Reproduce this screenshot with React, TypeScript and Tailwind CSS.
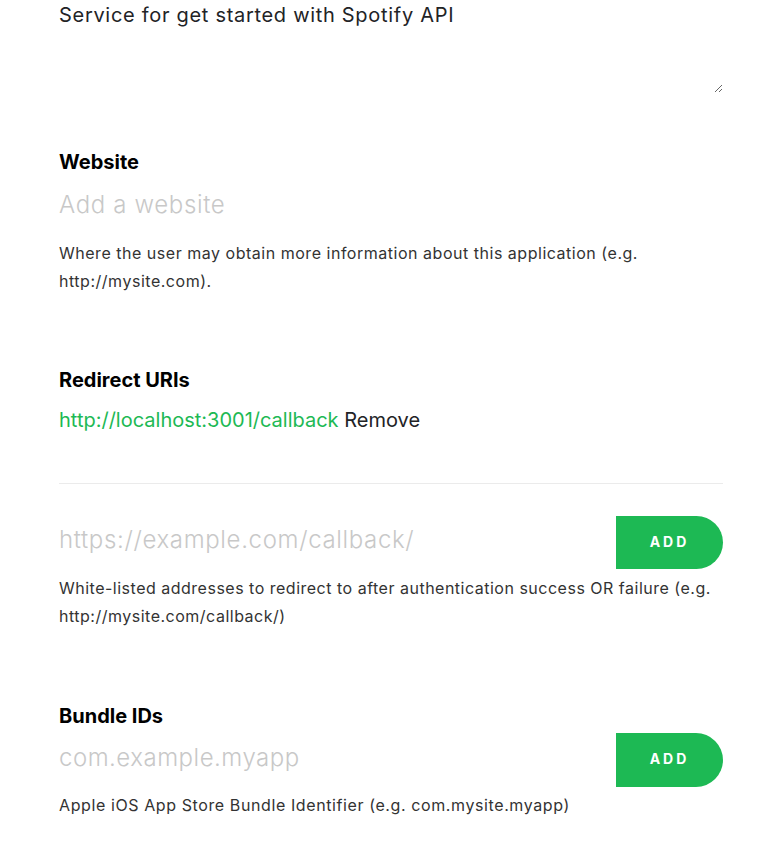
export default function App() {
  return (
    <div
      className="min-h-screen bg-white pl-[59px] pr-[35px] text-[#222326]"
      style={{ fontFamily: "Inter, 'Open Sans', sans-serif" }}
    >
      <textarea
        className="block w-full h-[93px] resize-y text-[20px] leading-[30px] tracking-[0.7px] text-[#222326] outline-none border-0 p-0"
        defaultValue="Service for get started with Spotify API"
      />

      {/* Website */}
      <section className="mt-[55px]">
        <h3 className="text-[20px] leading-[28px] font-bold text-black">Website</h3>
        <input
          className="mt-2 block w-full h-10 text-[24px] font-light tracking-[0.65px] text-[#222326] placeholder:text-[#c8c8c8] outline-none"
          placeholder="Add a website"
        />
        <p className="mt-[15px] text-[16px] leading-[28px] tracking-[0.52px] text-[#333]">
          Where the user may obtain more information about this application (e.g.
          <br />
          http://mysite.com).
        </p>
      </section>

      {/* Redirect URIs */}
      <section className="mt-[71px]">
        <h3 className="text-[20px] leading-[28px] font-bold text-black">Redirect URIs</h3>
        <div className="mt-3 text-[20px] leading-[28px]">
          <span className="text-[#1db954]">http://localhost:3001/callback</span>{" "}
          <span className="text-[#222326]">Remove</span>
        </div>
        <div className="mt-[49px] h-px bg-[#ebebeb]" />
        <div className="mt-8 flex items-center">
          <input
            className="flex-1 h-10 mb-[6px] text-[24px] font-light tracking-[0.65px] outline-none placeholder:text-[#c8c8c8]"
            placeholder="https://example.com/callback/"
          />
          <button className="w-[107px] h-[53px] pb-[3px] bg-[#1db954] rounded-r-full text-white text-[14px] font-bold tracking-[3px]">
            ADD
          </button>
        </div>
        <p className="mt-[5px] text-[16px] leading-[28px] tracking-[0.5px] text-[#333]">
          White-listed addresses to redirect to after authentication success OR failure (e.g.
          <br />
          http://mysite.com/callback/)
        </p>
      </section>

      {/* Bundle IDs */}
      <section className="mt-[72px]">
        <h3 className="text-[20px] leading-[28px] font-bold text-black">Bundle IDs</h3>
        <div className="mt-[3px] flex items-center">
          <input
            className="flex-1 h-10 mb-[6px] text-[24px] font-light tracking-[0.5px] outline-none placeholder:text-[#c8c8c8]"
            placeholder="com.example.myapp"
          />
          <button className="w-[107px] h-[54px] pb-[3px] bg-[#1db954] rounded-r-full text-white text-[14px] font-bold tracking-[3px]">
            ADD
          </button>
        </div>
        <p className="mt-1 text-[16px] leading-[28px] tracking-[0.6px] text-[#333]">
          Apple iOS App Store Bundle Identifier (e.g. com.mysite.myapp)
        </p>
      </section>
    </div>
  );
}
